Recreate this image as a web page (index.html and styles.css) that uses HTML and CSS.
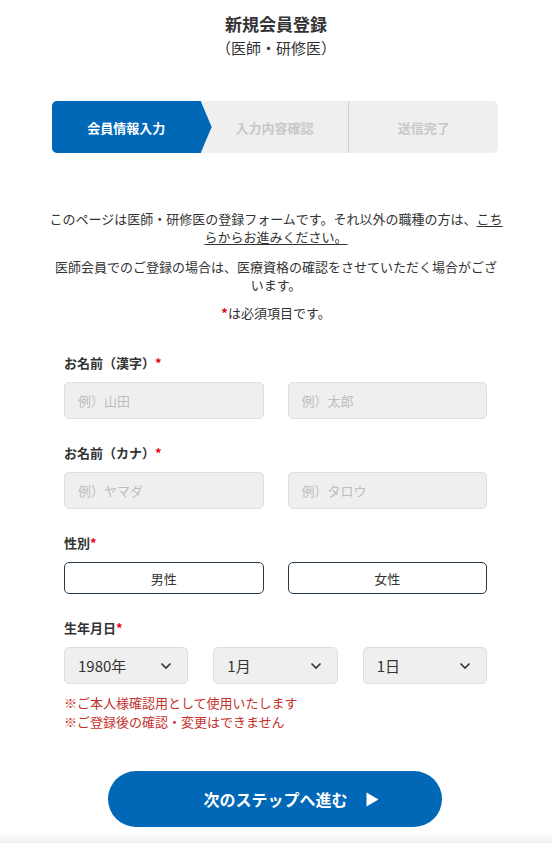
FILE: index.html
```html
<!DOCTYPE html>
<html lang="ja">

<head>
    <meta charset="UTF-8">
    <meta name="viewport" content="width=device-width, initial-scale=1.0">
    <title>新規会員登録</title>
    <link rel="stylesheet" href="styles.css">
</head>

<body>
    <header class="page-head">
        <h1>新規会員登録</h1>
        <p class="sub">（医師・研修医）</p>
    </header>

    <ol class="steps">
        <li class="step current">会員情報入力</li>
        <li class="step">入力内容確認</li>
        <li class="step last">送信完了</li>
    </ol>

    <div class="notice">
        <p>このページは医師・研修医の登録フォームです。それ以外の職種の方は、<a href="#">こちらからお進みください。</a></p>
        <p class="narrow">医師会員でのご登録の場合は、医療資格の確認をさせていただく場合がございます。</p>
        <p><span class="req">*</span>は必須項目です。</p>
    </div>

    <form class="form">
        <div class="field">
            <label class="label">お名前（漢字）<span class="req">*</span></label>
            <div class="row two">
                <input class="input" type="text" placeholder="例）山田">
                <input class="input" type="text" placeholder="例）太郎">
            </div>
        </div>

        <div class="field">
            <label class="label">お名前（カナ）<span class="req">*</span></label>
            <div class="row two">
                <input class="input" type="text" placeholder="例）ヤマダ">
                <input class="input" type="text" placeholder="例）タロウ">
            </div>
        </div>

        <div class="field">
            <label class="label">性別<span class="req">*</span></label>
            <div class="row two">
                <button type="button" class="choice">男性</button>
                <button type="button" class="choice">女性</button>
            </div>
        </div>

        <div class="field">
            <label class="label">生年月日<span class="req">*</span></label>
            <div class="row three">
                <div class="select"><span>1980年</span><svg width="12" height="8" viewBox="0 0 12 8"><path d="M1.5 1.5 6 6l4.5-4.5" fill="none" stroke="#333" stroke-width="1.6"/></svg></div>
                <div class="select"><span>1月</span><svg width="12" height="8" viewBox="0 0 12 8"><path d="M1.5 1.5 6 6l4.5-4.5" fill="none" stroke="#333" stroke-width="1.6"/></svg></div>
                <div class="select"><span>1日</span><svg width="12" height="8" viewBox="0 0 12 8"><path d="M1.5 1.5 6 6l4.5-4.5" fill="none" stroke="#333" stroke-width="1.6"/></svg></div>
            </div>
            <p class="note">※ご本人様確認用として使用いたします<br>※ご登録後の確認・変更はできません</p>
        </div>

        <button type="button" class="next">次のステップへ進む<svg width="13" height="15" viewBox="0 0 13 15"><path d="M0.5 0.5 12.5 7.5 0.5 14.5Z" fill="#fff"/></svg></button>
    </form>

    <footer class="foot"></footer>
</body>

</html>
```
FILE: styles.css
```css
* {
    box-sizing: border-box;
}

body {
    margin: 0;
    background: #fff;
    color: #333;
    font-family: "Noto Sans CJK JP", "Noto Sans", sans-serif;
    font-size: 13px;
}

.page-head {
    padding-top: 12px;
    text-align: center;
}

.page-head h1 {
    margin: 0;
    font-size: 17px;
    line-height: 24px;
    font-weight: bold;
}

.page-head .sub {
    margin: 0;
    font-size: 15px;
    line-height: 24px;
}

.steps {
    display: grid;
    grid-template-columns: 1fr 1fr 1fr;
    list-style: none;
    margin: 41px 54px 0 52px;
    padding: 0;
    height: 52px;
    background: #efefef;
    border-radius: 5px;
    overflow: hidden;
}

.step {
    display: flex;
    align-items: center;
    justify-content: center;
    font-weight: bold;
    font-size: 13px;
    color: #c8c8c8;
    border-right: 1px solid #cfcfcf;
}

.step.last {
    border-right: none;
}

.step.current {
    position: relative;
    background: #0068b7;
    color: #fff;
    border-right: none;
}

.step.current::after {
    content: "";
    position: absolute;
    top: 0;
    right: -11px;
    width: 11px;
    height: 100%;
    background: #0068b7;
    clip-path: polygon(0 0, 100% 50%, 0 100%);
}

.notice {
    margin: 57px auto 0;
    width: 456px;
    text-align: center;
    line-height: 18px;
}

.notice p {
    margin: 0 0 12px;
}

.notice p.narrow {
    padding: 0 6px;
    margin-bottom: 10px;
}

.notice p:last-child {
    margin-bottom: 0;
}

.notice a {
    color: #333;
    text-decoration: underline;
    text-underline-offset: 2px;
}

.req {
    color: #e60012;
    font-weight: bold;
}

.form {
    margin: 31px 65px 0 64px;
}

.field {
    margin-bottom: 24px;
}

.label {
    display: block;
    font-weight: bold;
    line-height: 20px;
    margin-bottom: 9px;
}

.row {
    display: grid;
}

.row.two {
    grid-template-columns: 1fr 1fr;
    gap: 24px;
}

.row.three {
    grid-template-columns: 1fr 1fr 1fr;
    gap: 25px;
}

.input {
    height: 37px;
    padding: 0 13px;
    border: 1px solid #dedede;
    border-radius: 5px;
    background: #efefef;
    font-family: inherit;
    font-size: 13px;
    color: #333;
}

.input::placeholder {
    color: #bdbdbd;
}

.choice {
    height: 32px;
    border: 1px solid #2b3a4a;
    border-radius: 5px;
    background: #fff;
    font-family: inherit;
    font-size: 13px;
    color: #333;
}

.select {
    display: flex;
    align-items: center;
    justify-content: space-between;
    height: 37px;
    padding: 0 15px 0 13px;
    border: 1px solid #dedede;
    border-radius: 5px;
    background: #efefef;
    font-size: 15px;
    color: #333;
}

.note {
    margin: 9px 0 0;
    line-height: 19px;
    color: #c5322d;
}

.field:last-of-type {
    margin-bottom: 0;
}

.next {
    display: flex;
    align-items: center;
    justify-content: center;
    gap: 18px;
    width: 334px;
    height: 56px;
    margin: 40px 0 0 44px;
    padding-left: 38px;
    border: none;
    border-radius: 28px;
    background: #0068b7;
    color: #fff;
    font-family: inherit;
    font-size: 16px;
    font-weight: bold;
}

.foot {
    margin-top: 4px;
    height: 40px;
    background: linear-gradient(#fff, #f0f0f0 12px, #f2f2f2);
}
```
